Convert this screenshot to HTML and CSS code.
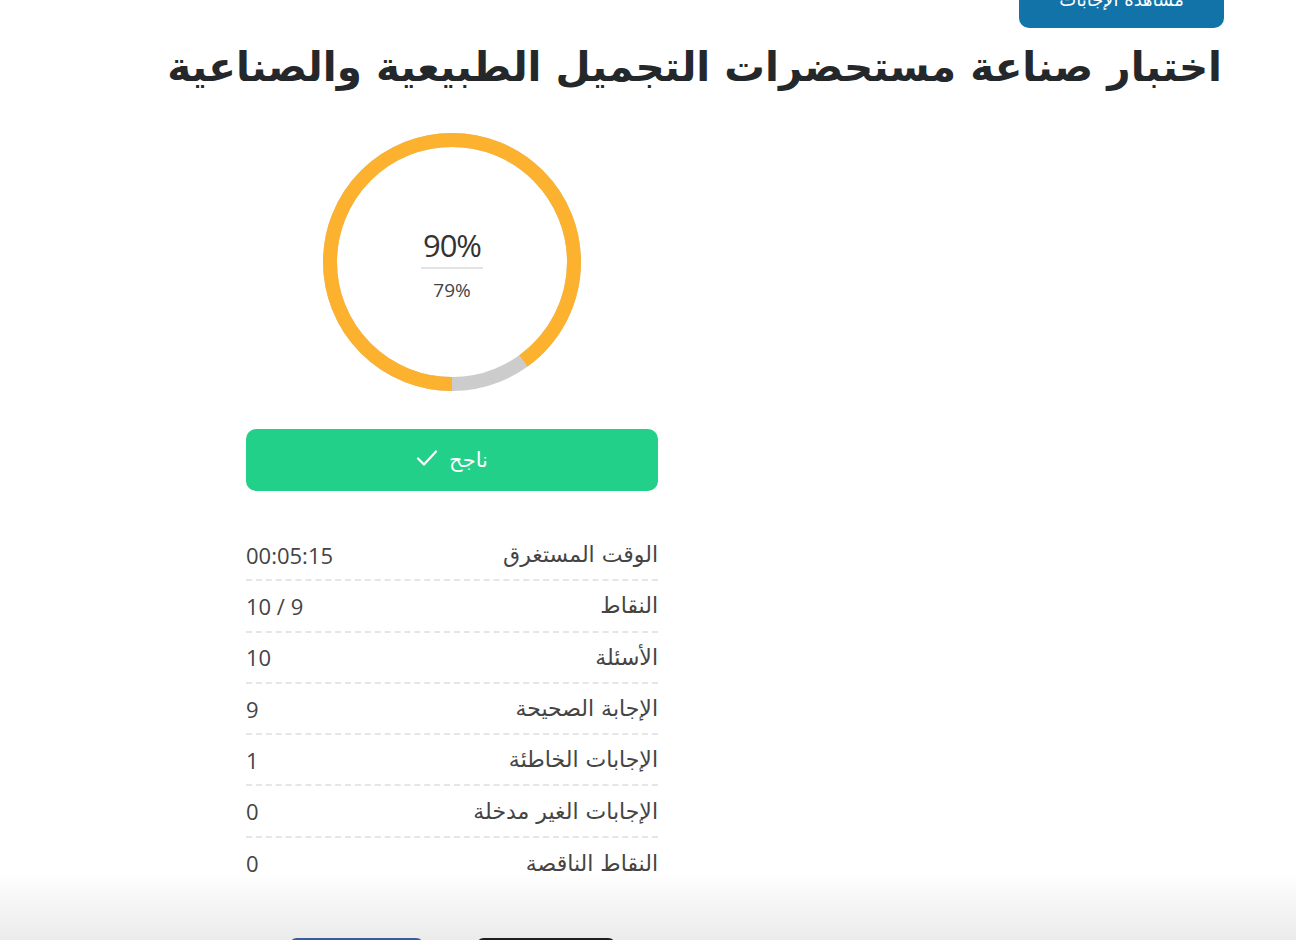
FILE: index.html
```html
<!DOCTYPE html>
<html lang="ar" dir="rtl">
<head>
<meta charset="utf-8">
<title>نتيجة الاختبار</title>
<link rel="stylesheet" href="styles.css">
</head>
<body>
<div class="page">
  <div class="top-actions">
    <a class="btn-answers" href="#">مشاهدة الإجابات</a>
  </div>
  <h1 class="title">اختبار صناعة مستحضرات التجميل الطبيعية والصناعية</h1>

  <div class="result">
    <div class="gauge">
      <svg class="ring" width="258" height="258" viewBox="0 0 258 258">
        <circle cx="129" cy="129" r="122" fill="none" stroke="#cccccc" stroke-width="14"/>
        <circle cx="129" cy="129" r="122" fill="none" stroke="#fcb22f" stroke-width="14"
                stroke-dasharray="689.9 766.5" transform="rotate(90 129 129)"/>
      </svg>
      <div class="gauge-text">
        <div class="score">90%</div>
        <div class="pass-mark">79%</div>
      </div>
    </div>

    <div class="status">
      <span>ناجح</span>
      <svg class="check" width="22" height="18" viewBox="0 0 22 18"><path d="M2 9.5 L8 15.5 L20 2.5" fill="none" stroke="#fff" stroke-width="2.2" stroke-linecap="round" stroke-linejoin="round"/></svg>
    </div>

    <ul class="stats">
      <li><span class="label">الوقت المستغرق</span><span class="value">00:05:15</span></li>
      <li><span class="label">النقاط</span><span class="value">10 / 9</span></li>
      <li><span class="label">الأسئلة</span><span class="value">10</span></li>
      <li><span class="label">الإجابة الصحيحة</span><span class="value">9</span></li>
      <li><span class="label">الإجابات الخاطئة</span><span class="value">1</span></li>
      <li><span class="label">الإجابات الغير مدخلة</span><span class="value">0</span></li>
      <li><span class="label">النقاط الناقصة</span><span class="value">0</span></li>
    </ul>
  </div>
</div>

<div class="share-bar">
  <div class="share-buttons">
    <a class="share share-black" href="#"></a>
    <a class="share share-blue" href="#"></a>
  </div>
</div>
</body>
</html>
```

FILE: styles.css
```css
* { box-sizing: border-box; }

html, body {
  margin: 0;
  padding: 0;
  background: #ffffff;
}

body {
  font-family: "Open Sans", "DejaVu Sans", sans-serif;
  color: #3a3a3a;
  overflow: hidden;
  height: 940px;
}

.page {
  padding: 0 72px 0 0;
  margin-top: -16px;
}

.top-actions {
  display: flex;
  justify-content: flex-start;
}

.btn-answers {
  display: block;
  width: 205px;
  height: 44px;
  background: #1273a8;
  color: #ffffff;
  border-radius: 10px;
  text-decoration: none;
  text-align: center;
  font-family: "DejaVu Sans", sans-serif;
  font-size: 18px;
  line-height: 32px;
}

.title {
  margin: 14px 2px 0 0;
  font-family: "DejaVu Sans", sans-serif;
  font-weight: 700;
  font-size: 40.5px;
  line-height: 50px;
  color: #25282b;
}

.result {
  width: 412px;
  margin-left: 246px;
  margin-right: auto;
  margin-top: 41px;
}

.gauge {
  position: relative;
  width: 258px;
  height: 258px;
  margin: 0 auto;
}

.ring {
  display: block;
}

.gauge-text {
  position: absolute;
  inset: 0;
  display: flex;
  flex-direction: column;
  align-items: center;
  justify-content: center;
  padding-top: 6px;
}

.score {
  font-size: 31px;
  line-height: 36px;
  color: #333333;
  padding: 0 2px 4px;
  border-bottom: 2px solid #e4e4e4;
  width: 62px;
  text-align: center;
  letter-spacing: -1px;
}

.pass-mark {
  font-size: 19px;
  line-height: 28px;
  margin-top: 7px;
  color: #444444;
}

.status {
  margin-top: 38px;
  height: 62px;
  background: #23d08a;
  border-radius: 10px;
  color: #ffffff;
  display: flex;
  align-items: center;
  justify-content: center;
  gap: 11px;
  font-family: "DejaVu Sans", sans-serif;
  font-size: 21px;
}

.check {
  display: block;
  margin-top: -4px;
}

.stats {
  list-style: none;
  margin: 39px 0 0;
  padding: 0;
}

.stats li {
  display: flex;
  justify-content: space-between;
  align-items: center;
  height: 51.3px;
  border-bottom: 2px dashed #e6e6e6;
  color: #444444;
}

.stats li:last-child {
  border-bottom: none;
}

.label {
  font-family: "DejaVu Sans", sans-serif;
  font-size: 22px;
}

.value {
  font-family: "Open Sans", sans-serif;
  font-size: 22px;
  direction: ltr;
}

.share-bar {
  position: fixed;
  left: 0;
  right: 0;
  bottom: 0;
  height: 66px;
  background: linear-gradient(to bottom, rgba(255,255,255,0) 0%, #f6f6f6 40%, #ebebeb 100%);
}

.share-buttons {
  direction: ltr;
  display: flex;
  gap: 52px;
  padding-left: 289px;
  padding-top: 64px;
}

.share {
  display: block;
  height: 20px;
  border-radius: 8px 8px 0 0;
}

.share-blue {
  order: 1;
  width: 135px;
  background: #3c5b9a;
}

.share-black {
  order: 2;
  width: 140px;
  background: #1e1e1e;
}
```
